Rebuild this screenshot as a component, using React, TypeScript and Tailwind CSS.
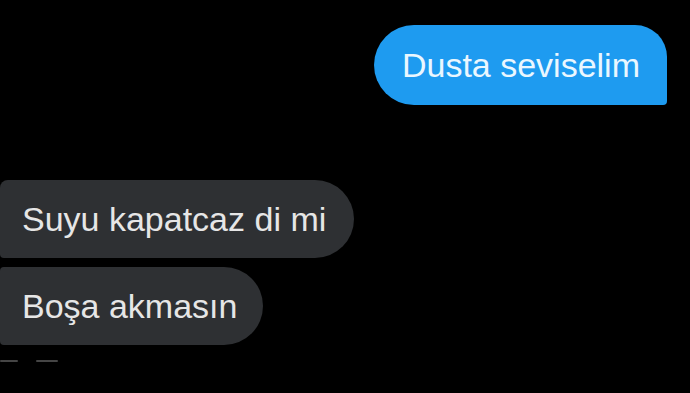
import React from "react";

const font = { fontFamily: '"Liberation Sans", Arial, sans-serif' };

export default function App() {
  return (
    <div
      className="w-[690px] h-[393px] bg-black overflow-hidden flex flex-col"
      style={font}
    >
      {/* sent */}
      <div className="flex justify-end pt-[25px] pr-[23px]">
        <div className="h-[80px] flex items-center pl-[28px] pr-[27px] bg-[#1e9bf0] text-[#eaf7ff] text-[34px] rounded-tl-[40px] rounded-bl-[40px] rounded-tr-[32px] rounded-br-[4px]">
          Dusta seviselim
        </div>
      </div>

      {/* received */}
      <div className="flex flex-col items-start gap-[9px] mt-[75px]">
        <div className="h-[78px] flex items-center pl-[22px] pr-[28px] bg-[#2e3033] text-[#e6e6e6] text-[34px] rounded-tl-[8px] rounded-bl-[4px] rounded-r-[40px]">
          Suyu kapatcaz di mi
        </div>
        <div className="h-[78px] flex items-center pl-[22px] pr-[26px] bg-[#2e3033] text-[#e6e6e6] text-[34px] rounded-l-[4px] rounded-r-[40px]">
          Boşa akmasın
        </div>
      </div>

      {/* cut-off footer */}
      <div className="flex gap-[18px] mt-[15px]">
        <div className="w-[18px] h-[2px] bg-[#454545] rounded-full blur-[0.6px]" />
        <div className="w-[22px] h-[2px] bg-[#454545] rounded-full blur-[0.6px]" />
      </div>
    </div>
  );
}
